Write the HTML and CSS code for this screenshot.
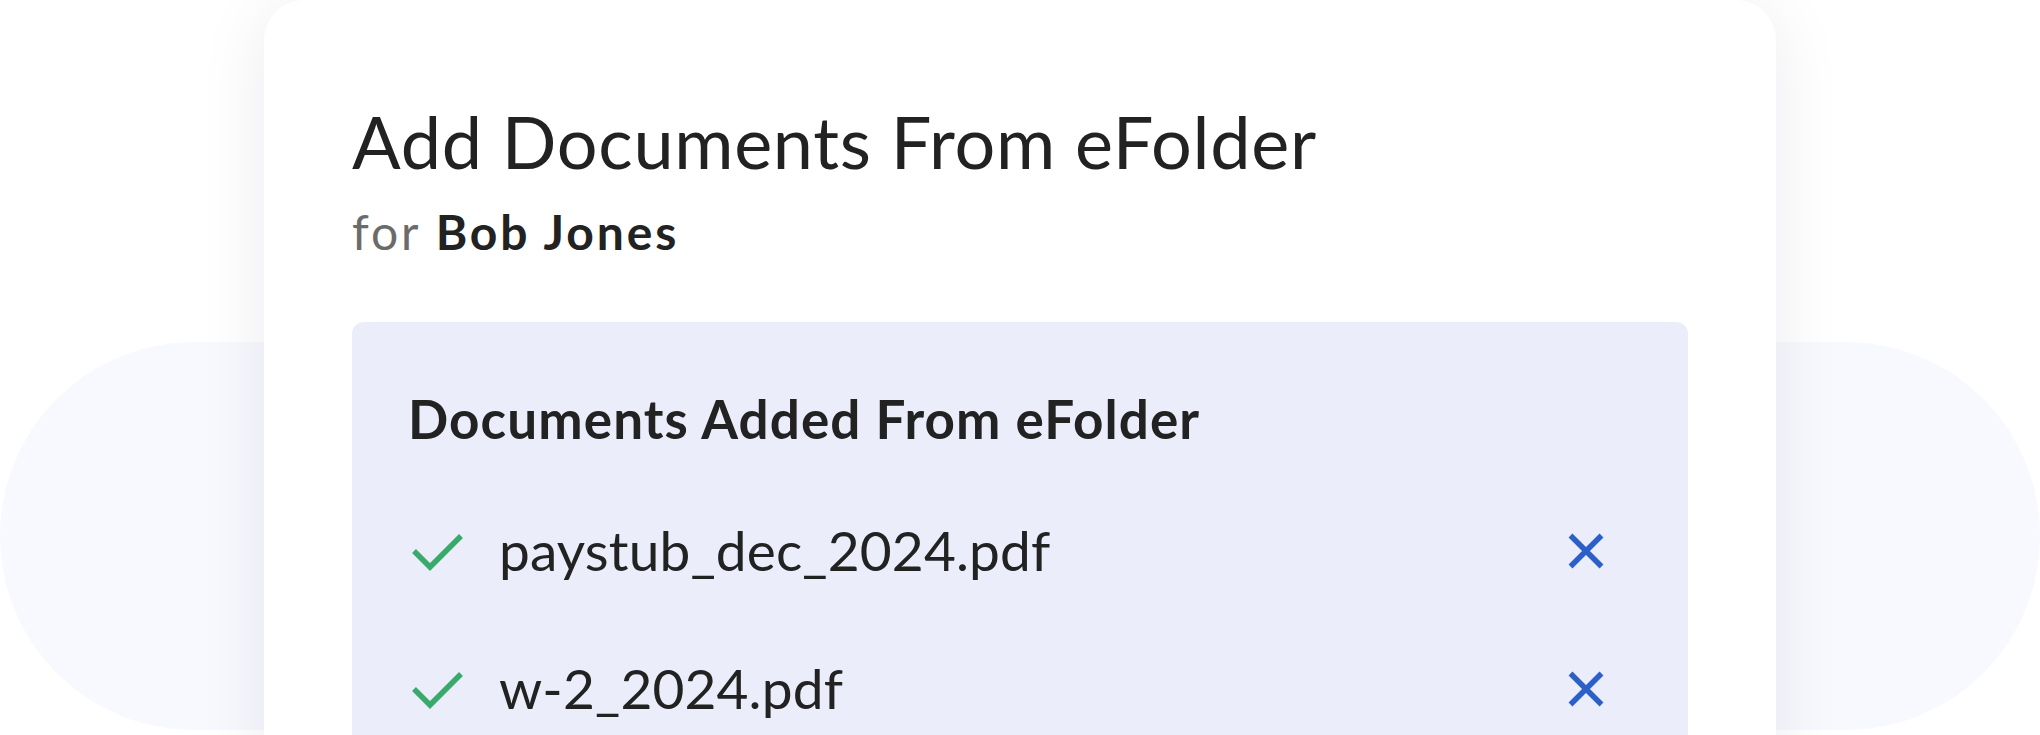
FILE: index.html
```html
<!DOCTYPE html>
<html lang="en">
<head>
<meta charset="utf-8">
<title>Add Documents From eFolder</title>
<link rel="stylesheet" href="styles.css">
</head>
<body>
<div class="stage">
  <div class="pill"></div>
  <section class="card">
    <h1 class="title">Add Documents From eFolder</h1>
    <p class="subtitle"><span class="for">for</span> <strong>Bob Jones</strong></p>
    <div class="panel">
      <h2 class="panel-title">Documents Added From eFolder</h2>
      <ul class="doc-list">
        <li class="doc">
          <svg class="check" viewBox="0 0 56 40" width="56" height="40" aria-hidden="true"><polyline points="6,20 22,36 53,5" fill="none" stroke="#3AAA6C" stroke-width="5.5"/></svg>
          <span class="doc-name">paystub_dec_2024.pdf</span>
          <svg class="remove" viewBox="0 0 36 36" width="36" height="36" aria-hidden="true"><path d="M2.5 2.5 L33.5 33.5 M33.5 2.5 L2.5 33.5" fill="none" stroke="#2C60C8" stroke-width="5.5"/></svg>
        </li>
        <li class="doc">
          <svg class="check" viewBox="0 0 56 40" width="56" height="40" aria-hidden="true"><polyline points="6,20 22,36 53,5" fill="none" stroke="#3AAA6C" stroke-width="5.5"/></svg>
          <span class="doc-name">w-2_2024.pdf</span>
          <svg class="remove" viewBox="0 0 36 36" width="36" height="36" aria-hidden="true"><path d="M2.5 2.5 L33.5 33.5 M33.5 2.5 L2.5 33.5" fill="none" stroke="#2C60C8" stroke-width="5.5"/></svg>
        </li>
      </ul>
    </div>
  </section>
</div>
</body>
</html>
```

FILE: styles.css
```css
html, body {
  margin: 0;
  padding: 0;
  background: #ffffff;
}

body {
  font-family: "Lato", "Open Sans", "Liberation Sans", sans-serif;
  color: #222222;
}

.stage {
  display: grid;
  width: 2040px;
  height: 735px;
  overflow: hidden;
}

.stage > * {
  grid-area: 1 / 1;
}

.pill {
  align-self: start;
  margin-top: 342px;
  height: 388px;
  border-radius: 194px;
  background: #F8F9FE;
}

.card {
  align-self: start;
  justify-self: center;
  width: 1512px;
  height: 820px;
  box-sizing: border-box;
  padding: 105px 88px 0;
  background: #ffffff;
  border-radius: 40px;
  box-shadow: 0 8px 70px rgba(20, 30, 60, 0.08);
}

.title {
  margin: 0;
  font-size: 72px;
  line-height: 1;
  font-weight: 400;
  letter-spacing: 0.7px;
  color: #222222;
}

.subtitle {
  margin: 31px 0 0;
  font-size: 48px;
  line-height: 1;
  letter-spacing: 2.9px;
  color: #222222;
}

.subtitle .for {
  color: #6B6B6B;
}

.subtitle strong {
  font-weight: 700;
}

.panel {
  margin-top: 66px;
  background: #EBEEFA;
  border-radius: 12px;
  padding: 70px 56px 0;
  height: 600px;
  box-sizing: border-box;
}

.panel-title {
  margin: 0;
  font-size: 53px;
  line-height: 1;
  font-weight: 700;
  letter-spacing: 1.1px;
  color: #222222;
}

.doc-list {
  list-style: none;
  margin: 78px 0 0;
  padding: 0;
  display: flex;
  flex-direction: column;
  gap: 83px;
}

.doc {
  display: flex;
  align-items: center;
  height: 55px;
}

.check {
  flex: none;
  margin-right: 35px;
}

.doc-name {
  flex: 1;
  font-size: 55px;
  line-height: 1;
  letter-spacing: 0.15px;
  color: #222222;
}

.remove {
  flex: none;
  margin-right: 28px;
}
```
